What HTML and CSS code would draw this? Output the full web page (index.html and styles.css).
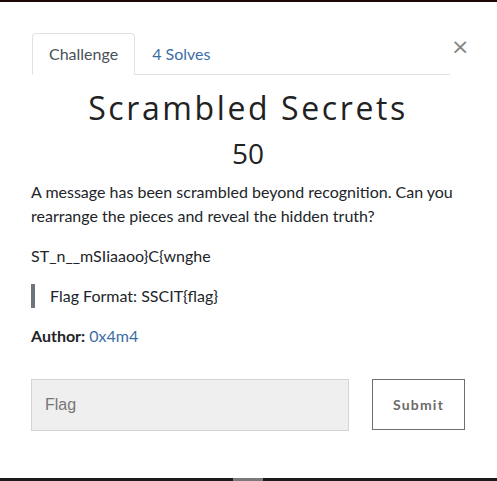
FILE: index.html
```html
<!DOCTYPE html>
<html lang="en">
<head>
<meta charset="utf-8">
<title>Scrambled Secrets</title>
<link rel="stylesheet" href="styles.css">
</head>
<body>
<div class="topline"></div>
<div class="modal">
  <div class="head">
    <ul class="tabs">
      <li class="tab active">Challenge</li>
      <li class="tab link">4 Solves</li>
    </ul>
    <button class="close" type="button">&times;</button>
  </div>
  <h2 class="name">Scrambled Secrets</h2>
  <h3 class="value">50</h3>
  <p>A message has been scrambled beyond recognition. Can you rearrange the pieces and reveal the hidden truth?</p>
  <p>ST_n__mSIiaaoo}C{wnghe</p>
  <blockquote class="quote">Flag Format: SSCIT{flag}</blockquote>
  <p><strong>Author:</strong> <a class="author" href="#">0x4m4</a></p>
  <form class="flagform">
    <input class="flag" type="text" placeholder="Flag">
    <button class="submit" type="button">Submit</button>
  </form>
</div>
<div class="bottombar"><span class="thumb"></span></div>
</body>
</html>
```
FILE: styles.css
```css
* { box-sizing: border-box; }
html, body { margin: 0; padding: 0; background: #fff; }
body {
  width: 497px;
  height: 481px;
  overflow: hidden;
  font-family: Lato, "Liberation Sans", sans-serif;
  font-size: 16px;
  line-height: 24px;
  color: #212529;
  display: flex;
  flex-direction: column;
}
.topline { height: 2px; background: #1e0707; flex: none; }
.modal {
  flex: 1;
  padding: 31px 32px 0 31px;
}
.head { display: flex; align-items: flex-start; }
.tabs {
  list-style: none;
  margin: 0;
  padding: 0;
  display: flex;
  flex: 1;
  border-bottom: 1px solid #dee2e6;
  margin-left: 1px;
}
.tab {
  padding: 8px 16px;
  margin-bottom: -1px;
  border: 1px solid transparent;
  border-radius: 4px 4px 0 0;
}
.tab.active {
  color: #495057;
  border-color: #dee2e6 #dee2e6 #fff;
  background: #fff;
}
.tab.link { color: #3a6ea5; padding-left: 16px; }
.close {
  width: 14px;
  margin: 0 0 0 1px;
  padding: 0;
  border: 0;
  background: none;
  font-family: "DejaVu Sans", sans-serif;
  font-size: 22px;
  line-height: 24px;
  font-weight: 400;
  color: #858585;
  margin-top: 2px;
}
.name {
  margin: 14px 0 0;
  text-align: center;
  font-family: "Open Sans", sans-serif;
  font-weight: 400;
  font-size: 32px;
  line-height: 38px;
  letter-spacing: 2.6px;
  color: #222;
}
.value {
  margin: 9px 0 10px;
  text-align: center;
  font-family: "Open Sans", sans-serif;
  font-weight: 400;
  font-size: 28px;
  line-height: 34px;
  color: #222;
}
p { margin: 0 0 16px; }
.quote {
  margin: 0 0 16px;
  padding: 0 0 0 15px;
  border-left: 4px solid #6c757d;
}
strong { font-weight: 700; }
.author { color: #3a6ea5; text-decoration: none; }
.flagform {
  display: flex;
  gap: 23px;
  margin-top: 31px;
}
.flag {
  width: 318px;
  height: 52px;
  padding: 0 13px;
  border: 1px solid #d4d4d4;
  background: #efefef;
  font-family: "Liberation Sans", sans-serif;
  font-size: 16px;
  color: #333;
}
.flag::placeholder { color: #777; }
.submit {
  width: 93px;
  height: 51px;
  border: 1px solid #6f6f6f;
  background: #fff;
  font-family: Lato, sans-serif;
  font-weight: 700;
  font-size: 14px;
  letter-spacing: 1.2px;
  color: #6b6b6b;
  padding: 0;
}
.bottombar {
  height: 3px;
  flex: none;
  background: #1b1b1b;
  position: relative;
}
.thumb {
  position: absolute;
  left: 233px;
  width: 30px;
  top: 0;
  bottom: 0;
  background: #7a7a7a;
}
```
